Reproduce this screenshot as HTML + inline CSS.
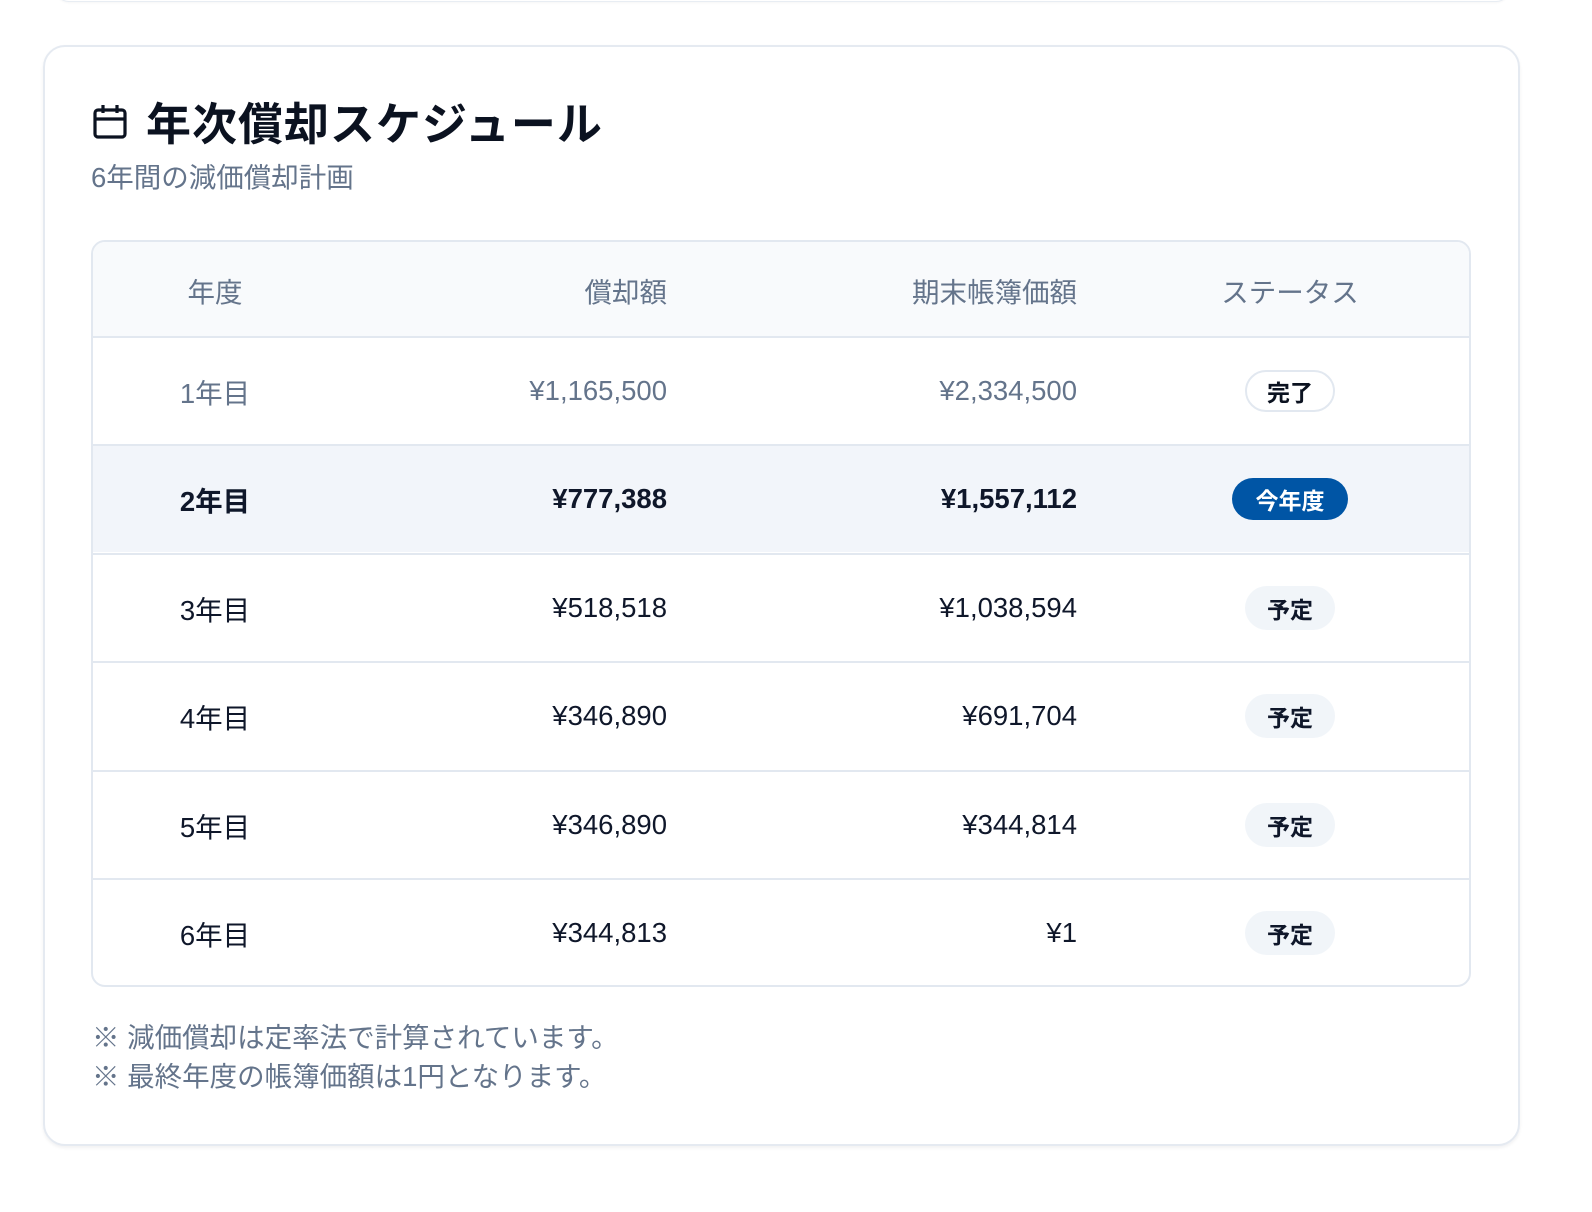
<!DOCTYPE html>
<html><head><meta charset="utf-8"><style>
*{box-sizing:border-box;margin:0;padding:0}
body{width:1592px;height:1212px;background:#fff;font-family:"Liberation Sans","Noto Sans CJK JP",sans-serif;color:#0f172a;position:relative;overflow:hidden}
.topbar{position:absolute;left:55px;right:82px;top:-20px;height:22px;border:1px solid #e8edf3;border-radius:0 0 14px 14px;box-shadow:0 1px 2px rgba(0,0,0,.04)}
.card{position:absolute;left:43px;top:45px;width:1477px;height:1101px;border:2px solid #e5eaf1;border-radius:22px;box-shadow:0 2px 3px rgba(15,23,42,.06)}
.title{position:absolute;left:92px;top:88px;display:flex;align-items:center;gap:18px;font-size:45px;font-weight:bold;color:#0b1220;letter-spacing:1px}
.sub{position:absolute;left:91px;top:155px;font-size:27.5px;color:#64748b}
.tbl{position:absolute;left:91px;top:240px;width:1380px;height:747px;border:2px solid #e2e8f0;border-radius:14px;overflow:hidden}
.row{position:absolute;left:0;right:0;height:108px;border-top:2px solid #e2e8f0;font-size:27.5px}
.row div,.hd div{position:absolute;top:0;height:100%;display:flex;align-items:center;white-space:nowrap}
.c1{left:0;width:244px;justify-content:center}
.c2{right:802px;justify-content:flex-end}
.c3{right:392px;justify-content:flex-end}
.c4{left:1100px;width:194px;justify-content:center}
.hd{position:absolute;left:0;right:0;top:0;height:95px;background:#f8fafc;color:#64748b;font-size:27.5px}
.b{display:inline-flex;align-items:center;justify-content:center;height:40px;border-radius:22px;font-size:23px;font-weight:bold;white-space:nowrap}
.notes{position:absolute;left:92px;top:1018px;font-size:27.5px;color:#64748b;line-height:39px}
</style></head><body>
<div class="topbar"></div>
<div class="card"></div>
<div class="title"><svg width="36" height="38" viewBox="0 0 36 38" fill="none" stroke="#0b1220" stroke-width="3.2" stroke-linejoin="round"><rect x="3" y="8" width="30" height="27" rx="3"/><path d="M3 17H33M11 3V11M25 3V11"/></svg><span>年次償却スケジュール</span></div>
<div class="sub">6年間の減価償却計画</div>
<div class="tbl">
<div class="hd"><div class="c1">年度</div><div class="c2">償却額</div><div class="c3">期末帳簿価額</div><div class="c4">ステータス</div></div>
<div class="row" style="top:94px;color:#64748b"><div class="c1">1年目</div><div class="c2">¥1,165,500</div><div class="c3">¥2,334,500</div><div class="c4"><span class="b" style="border:2px solid #e2e8f0;color:#0b1220;height:42px;width:90px">完了</span></div></div>
<div class="row" style="top:202px;background:#f2f5fa;font-weight:bold"><div class="c1">2年目</div><div class="c2">¥777,388</div><div class="c3">¥1,557,112</div><div class="c4"><span class="b" style="background:#0055a5;color:#fff;width:116px;height:42px">今年度</span></div></div>
<div class="row" style="top:311px"><div class="c1">3年目</div><div class="c2">¥518,518</div><div class="c3">¥1,038,594</div><div class="c4"><span class="b" style="background:#f1f5f9;width:90px;height:44px">予定</span></div></div>
<div class="row" style="top:419px"><div class="c1">4年目</div><div class="c2">¥346,890</div><div class="c3">¥691,704</div><div class="c4"><span class="b" style="background:#f1f5f9;width:90px;height:44px">予定</span></div></div>
<div class="row" style="top:528px"><div class="c1">5年目</div><div class="c2">¥346,890</div><div class="c3">¥344,814</div><div class="c4"><span class="b" style="background:#f1f5f9;width:90px;height:44px">予定</span></div></div>
<div class="row" style="top:636px"><div class="c1">6年目</div><div class="c2">¥344,813</div><div class="c3">¥1</div><div class="c4"><span class="b" style="background:#f1f5f9;width:90px;height:44px">予定</span></div></div>
</div>
<div class="notes">※ 減価償却は定率法で計算されています。<br>※ 最終年度の帳簿価額は1円となります。</div>
</body></html>
